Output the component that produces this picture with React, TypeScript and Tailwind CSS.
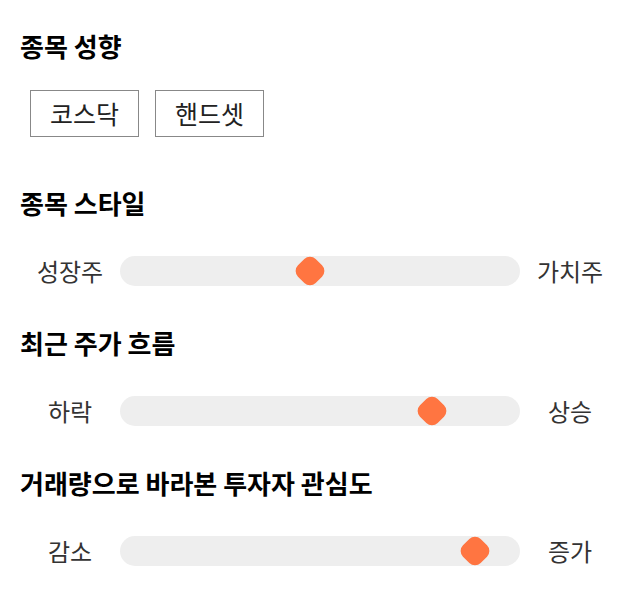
type SliderRow = {
  left: string;
  right: string;
  value: number;
};

const sliders: { title: string; row: SliderRow }[] = [
  { title: '종목 스타일', row: { left: '성장주', right: '가치주', value: 47.5 } },
  { title: '최근 주가 흐름', row: { left: '하락', right: '상승', value: 78 } },
  { title: '거래량으로 바라본 투자자 관심도', row: { left: '감소', right: '증가', value: 88.75 } },
];

function Heading({ children }: { children: string }) {
  return <h2 className="text-[26px] font-bold leading-[30px] text-black">{children}</h2>;
}

function Slider({ row }: { row: SliderRow }) {
  return (
    <div className="flex items-center">
      <span className="w-[100px] text-center text-[24px] leading-[30px] text-[#333]">{row.left}</span>
      <div className="relative h-[30px] flex-1 rounded-full bg-[#eeeeee]">
        <div
          className="absolute top-1/2 h-[25px] w-[25px] -translate-x-1/2 -translate-y-1/2 rotate-45 rounded-[8px] bg-[#ff7541]"
          style={{ left: `${row.value}%` }}
        />
      </div>
      <span className="w-[100px] text-center text-[24px] leading-[30px] text-[#333]">{row.right}</span>
    </div>
  );
}

export default function App() {
  return (
    <div className="min-h-screen bg-white px-5 pt-[31px] font-['Noto_Sans_CJK_KR',sans-serif]">
      <Heading>종목 성향</Heading>
      <div className="ml-[10px] mt-[29px] flex gap-4">
        {['코스닥', '핸드셋'].map((label) => (
          <button
            key={label}
            className="h-[47px] w-[109px] border border-[#888] bg-white text-[25px] text-[#222]"
          >
            {label}
          </button>
        ))}
      </div>
      {sliders.map(({ title, row }, i) => (
        <section key={title} className={i === 0 ? 'mt-[51px]' : 'mt-[42px]'}>
          <Heading>{title}</Heading>
          <div className="mt-[38px]">
            <Slider row={row} />
          </div>
        </section>
      ))}
    </div>
  );
}
